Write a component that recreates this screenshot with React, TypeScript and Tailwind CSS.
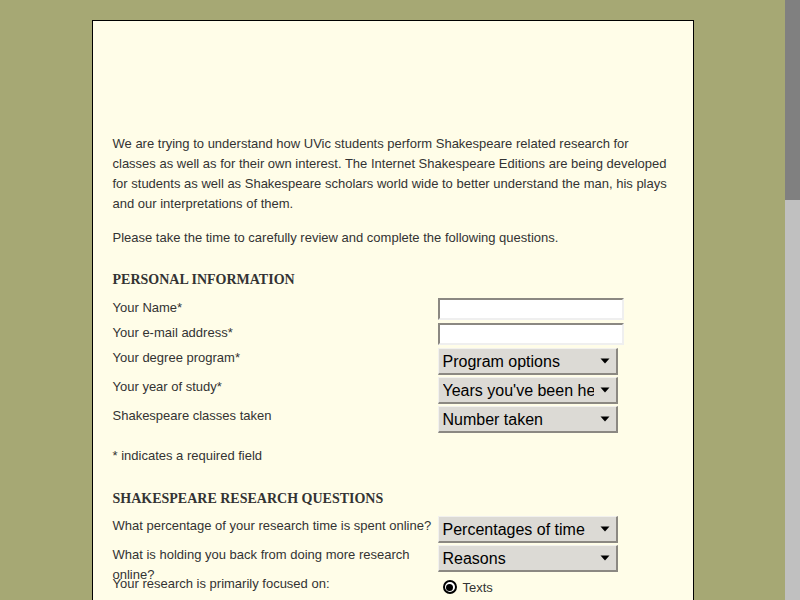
import React from 'react';

const sans = { fontFamily: '"Liberation Sans", Arial, sans-serif' };
const serif = { fontFamily: '"Liberation Serif", "Times New Roman", serif' };

const TextInput = () => (
  <div className="w-[186px] h-[22px] bg-white border-2 border-t-[#8b8882] border-l-[#8b8882] border-b-[#efefef] border-r-[#efefef]" />
);

const Select = ({ label }: { label: string }) => (
  <div className="w-[180px] h-[27px] flex items-center bg-[#dcdad5] border-t border-l border-t-[#f2f1ee] border-l-[#f2f1ee] border-b-2 border-r-2 border-b-[#8b8882] border-r-[#8b8882] pl-[4px] pr-[6px]">
    <span className="flex-1 min-w-0 overflow-hidden whitespace-nowrap text-[16px] leading-[19px] text-black">
      {label}
    </span>
    <svg width="10" height="6" viewBox="0 0 10 6" className="ml-[6px] shrink-0">
      <polygon points="0.5,0.5 9.5,0.5 5,5.5" fill="#000" />
    </svg>
  </div>
);

const Label = ({ children }: { children: React.ReactNode }) => (
  <div className="text-[13px] leading-[20px] text-[#333]">{children}</div>
);

const Row = ({
  height,
  label,
  control,
}: {
  height: string;
  label: React.ReactNode;
  control: React.ReactNode;
}) => (
  <div className={`grid grid-cols-[325px_1fr] ${height}`}>
    <Label>{label}</Label>
    <div>{control}</div>
  </div>
);

export default function App() {
  return (
    <div className="h-screen flex bg-[#a6a874] overflow-hidden" style={sans}>
      <div className="flex-1 min-w-0 pt-[20px]">
        <div className="mx-auto w-[602px] h-[620px] bg-[#fffde8] border border-black px-[20px]">
          <div className="h-[113px]" />
          <p className="text-[13px] leading-[20px] text-[#333]">
            We are trying to understand how UVic students perform Shakespeare related research for
            classes as well as for their own interest. The Internet Shakespeare Editions are being
            developed for students as well as Shakespeare scholars world wide to better understand
            the man, his plays and our interpretations of them.
          </p>
          <p className="mt-[14px] text-[13px] leading-[20px] text-[#333]">
            Please take the time to carefully review and complete the following questions.
          </p>

          <h2 className="mt-[23px] text-[14px] leading-[18px] font-bold text-[#333]" style={serif}>
            PERSONAL INFORMATION
          </h2>
          <div className="mt-[9px]">
            <Row height="h-[25px]" label="Your Name*" control={<TextInput />} />
            <Row height="h-[25px]" label="Your e-mail address*" control={<TextInput />} />
            <Row height="h-[29px]" label="Your degree program*" control={<Select label="Program options" />} />
            <Row height="h-[29px]" label="Your year of study*" control={<Select label="Years you've been here" />} />
            <Row height="h-[29px]" label="Shakespeare classes taken" control={<Select label="Number taken" />} />
          </div>

          <p className="mt-[11px] text-[13px] leading-[20px] text-[#333]">* indicates a required field</p>

          <h2 className="mt-[24px] text-[14px] leading-[18px] font-bold text-[#333]" style={serif}>
            SHAKESPEARE RESEARCH QUESTIONS
          </h2>
          <div className="mt-[8px]">
            <Row
              height="h-[29px]"
              label="What percentage of your research time is spent online?"
              control={<Select label="Percentages of time" />}
            />
            <Row
              height="h-[29px]"
              label="What is holding you back from doing more research online?"
              control={<Select label="Reasons" />}
            />
            <Row
              height="h-[40px]"
              label="Your research is primarily focused on:"
              control={
                <div className="flex items-center pl-[5px] pt-[4px]">
                  <span className="w-[14px] h-[14px] rounded-full border-2 border-black bg-white flex items-center justify-center">
                    <span className="w-[7px] h-[7px] rounded-full bg-black" />
                  </span>
                  <span className="ml-[6px] mt-[2px] text-[13px] leading-[16px] text-[#333]">Texts</span>
                </div>
              }
            />
          </div>
        </div>
      </div>
      <div className="w-[15px] shrink-0 flex flex-col bg-[#c0c0c0]">
        <div className="h-[200px] bg-[#808080]" />
      </div>
    </div>
  );
}
